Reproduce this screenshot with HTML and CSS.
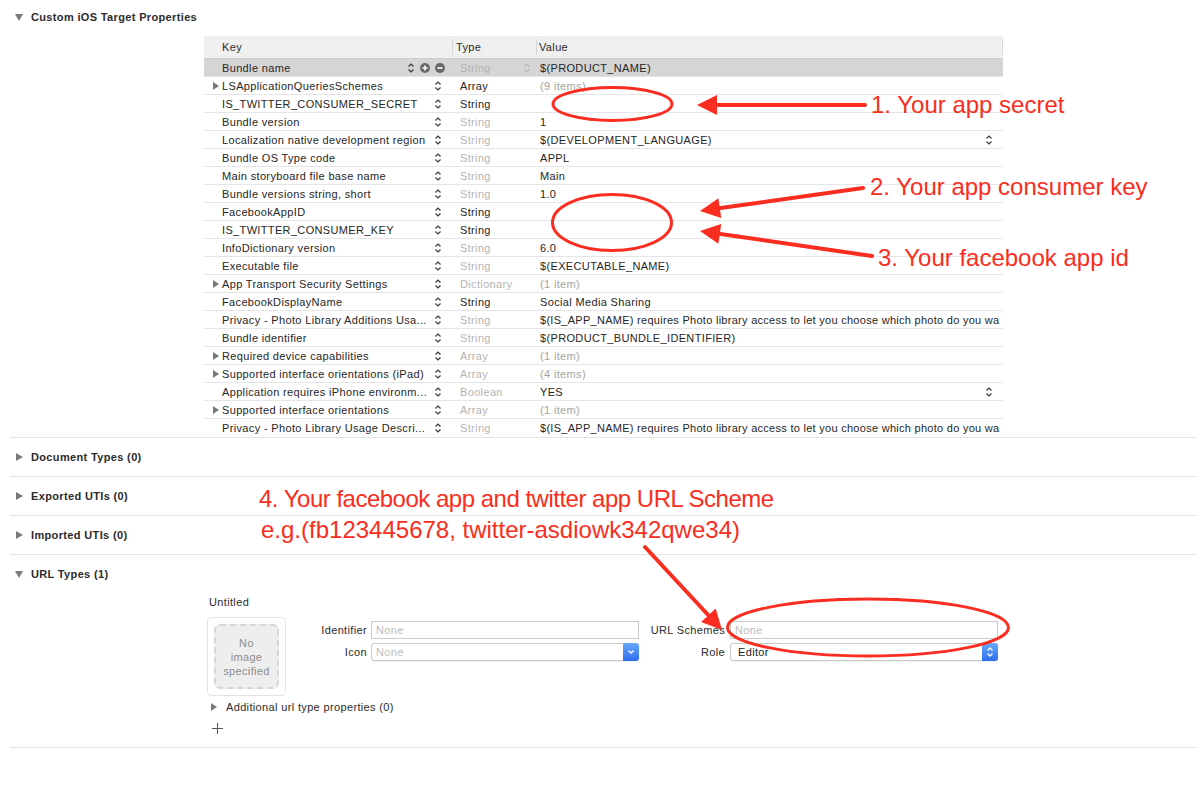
FILE: index.html
```html
<!DOCTYPE html>
<html>
<head>
<meta charset="utf-8">
<link rel="stylesheet" href="styles.css">
</head>
<body>
<div class="page">
  <section class="sec sec-first">
    <div class="sec-head"><svg class="tri-down" width="8" height="7" viewBox="0 0 8 7"><path d="M0 0H8L4 7Z"/></svg><span>Custom iOS Target Properties</span></div>
    <div class="plist">
      <div class="phead">
        <div class="hc hkey">Key</div>
        <div class="hc htype">Type</div>
        <div class="hc hval">Value</div>
      </div>
      <div class="row sel">
        <div class="k"><span class="ts"></span><span class="kt">Bundle name</span>
          <svg class="stp" width="8" height="12" viewBox="0 0 8 12"><path d="M1.5 4.5 4 2 6.5 4.5M1.5 7.5 4 10 6.5 7.5"/></svg>
          <svg class="pm" width="10" height="10" viewBox="0 0 10 10"><circle cx="5" cy="5" r="5"/><path d="M2.4 5H7.6M5 2.4V7.6"/></svg>
          <svg class="pm" width="10" height="10" viewBox="0 0 10 10"><circle cx="5" cy="5" r="5"/><path d="M2.4 5H7.6"/></svg>
        </div>
        <div class="t dim">String<svg class="stp light" width="8" height="12" viewBox="0 0 8 12"><path d="M1.5 4.5 4 2 6.5 4.5M1.5 7.5 4 10 6.5 7.5"/></svg></div>
        <div class="v">$(PRODUCT_NAME)</div>
      </div>
      <div class="row">
        <div class="k"><span class="ts"><svg class="tri" width="6" height="8" viewBox="0 0 6 8"><path d="M0 0 6 4 0 8Z"/></svg></span><span class="kt">LSApplicationQueriesSchemes</span><svg class="stp" width="8" height="12" viewBox="0 0 8 12"><path d="M1.5 4.5 4 2 6.5 4.5M1.5 7.5 4 10 6.5 7.5"/></svg></div>
        <div class="t">Array</div>
        <div class="v dim2">(9 items)</div>
      </div>
      <div class="row">
        <div class="k"><span class="ts"></span><span class="kt">IS_TWITTER_CONSUMER_SECRET</span><svg class="stp" width="8" height="12" viewBox="0 0 8 12"><path d="M1.5 4.5 4 2 6.5 4.5M1.5 7.5 4 10 6.5 7.5"/></svg></div>
        <div class="t">String</div>
        <div class="v"></div>
      </div>
      <div class="row">
        <div class="k"><span class="ts"></span><span class="kt">Bundle version</span><svg class="stp" width="8" height="12" viewBox="0 0 8 12"><path d="M1.5 4.5 4 2 6.5 4.5M1.5 7.5 4 10 6.5 7.5"/></svg></div>
        <div class="t dim">String</div>
        <div class="v">1</div>
      </div>
      <div class="row">
        <div class="k"><span class="ts"></span><span class="kt">Localization native development region</span><svg class="stp" width="8" height="12" viewBox="0 0 8 12"><path d="M1.5 4.5 4 2 6.5 4.5M1.5 7.5 4 10 6.5 7.5"/></svg></div>
        <div class="t dim">String</div>
        <div class="v"><span class="vt">$(DEVELOPMENT_LANGUAGE)</span><svg class="stp" width="8" height="12" viewBox="0 0 8 12"><path d="M1.5 4.5 4 2 6.5 4.5M1.5 7.5 4 10 6.5 7.5"/></svg></div>
      </div>
      <div class="row">
        <div class="k"><span class="ts"></span><span class="kt">Bundle OS Type code</span><svg class="stp" width="8" height="12" viewBox="0 0 8 12"><path d="M1.5 4.5 4 2 6.5 4.5M1.5 7.5 4 10 6.5 7.5"/></svg></div>
        <div class="t dim">String</div>
        <div class="v">APPL</div>
      </div>
      <div class="row">
        <div class="k"><span class="ts"></span><span class="kt">Main storyboard file base name</span><svg class="stp" width="8" height="12" viewBox="0 0 8 12"><path d="M1.5 4.5 4 2 6.5 4.5M1.5 7.5 4 10 6.5 7.5"/></svg></div>
        <div class="t dim">String</div>
        <div class="v">Main</div>
      </div>
      <div class="row">
        <div class="k"><span class="ts"></span><span class="kt">Bundle versions string, short</span><svg class="stp" width="8" height="12" viewBox="0 0 8 12"><path d="M1.5 4.5 4 2 6.5 4.5M1.5 7.5 4 10 6.5 7.5"/></svg></div>
        <div class="t dim">String</div>
        <div class="v">1.0</div>
      </div>
      <div class="row">
        <div class="k"><span class="ts"></span><span class="kt">FacebookAppID</span><svg class="stp" width="8" height="12" viewBox="0 0 8 12"><path d="M1.5 4.5 4 2 6.5 4.5M1.5 7.5 4 10 6.5 7.5"/></svg></div>
        <div class="t">String</div>
        <div class="v"></div>
      </div>
      <div class="row">
        <div class="k"><span class="ts"></span><span class="kt">IS_TWITTER_CONSUMER_KEY</span><svg class="stp" width="8" height="12" viewBox="0 0 8 12"><path d="M1.5 4.5 4 2 6.5 4.5M1.5 7.5 4 10 6.5 7.5"/></svg></div>
        <div class="t">String</div>
        <div class="v"></div>
      </div>
      <div class="row">
        <div class="k"><span class="ts"></span><span class="kt">InfoDictionary version</span><svg class="stp" width="8" height="12" viewBox="0 0 8 12"><path d="M1.5 4.5 4 2 6.5 4.5M1.5 7.5 4 10 6.5 7.5"/></svg></div>
        <div class="t dim">String</div>
        <div class="v">6.0</div>
      </div>
      <div class="row">
        <div class="k"><span class="ts"></span><span class="kt">Executable file</span><svg class="stp" width="8" height="12" viewBox="0 0 8 12"><path d="M1.5 4.5 4 2 6.5 4.5M1.5 7.5 4 10 6.5 7.5"/></svg></div>
        <div class="t dim">String</div>
        <div class="v">$(EXECUTABLE_NAME)</div>
      </div>
      <div class="row">
        <div class="k"><span class="ts"><svg class="tri" width="6" height="8" viewBox="0 0 6 8"><path d="M0 0 6 4 0 8Z"/></svg></span><span class="kt">App Transport Security Settings</span><svg class="stp" width="8" height="12" viewBox="0 0 8 12"><path d="M1.5 4.5 4 2 6.5 4.5M1.5 7.5 4 10 6.5 7.5"/></svg></div>
        <div class="t dim">Dictionary</div>
        <div class="v dim2">(1 item)</div>
      </div>
      <div class="row">
        <div class="k"><span class="ts"></span><span class="kt">FacebookDisplayName</span><svg class="stp" width="8" height="12" viewBox="0 0 8 12"><path d="M1.5 4.5 4 2 6.5 4.5M1.5 7.5 4 10 6.5 7.5"/></svg></div>
        <div class="t">String</div>
        <div class="v">Social Media Sharing</div>
      </div>
      <div class="row">
        <div class="k"><span class="ts"></span><span class="kt">Privacy - Photo Library Additions Usa...</span><svg class="stp" width="8" height="12" viewBox="0 0 8 12"><path d="M1.5 4.5 4 2 6.5 4.5M1.5 7.5 4 10 6.5 7.5"/></svg></div>
        <div class="t dim">String</div>
        <div class="v long">$(IS_APP_NAME) requires Photo library access to let you choose which photo do you wa</div>
      </div>
      <div class="row">
        <div class="k"><span class="ts"></span><span class="kt">Bundle identifier</span><svg class="stp" width="8" height="12" viewBox="0 0 8 12"><path d="M1.5 4.5 4 2 6.5 4.5M1.5 7.5 4 10 6.5 7.5"/></svg></div>
        <div class="t dim">String</div>
        <div class="v">$(PRODUCT_BUNDLE_IDENTIFIER)</div>
      </div>
      <div class="row">
        <div class="k"><span class="ts"><svg class="tri" width="6" height="8" viewBox="0 0 6 8"><path d="M0 0 6 4 0 8Z"/></svg></span><span class="kt">Required device capabilities</span><svg class="stp" width="8" height="12" viewBox="0 0 8 12"><path d="M1.5 4.5 4 2 6.5 4.5M1.5 7.5 4 10 6.5 7.5"/></svg></div>
        <div class="t dim">Array</div>
        <div class="v dim2">(1 item)</div>
      </div>
      <div class="row">
        <div class="k"><span class="ts"><svg class="tri" width="6" height="8" viewBox="0 0 6 8"><path d="M0 0 6 4 0 8Z"/></svg></span><span class="kt">Supported interface orientations (iPad)</span><svg class="stp" width="8" height="12" viewBox="0 0 8 12"><path d="M1.5 4.5 4 2 6.5 4.5M1.5 7.5 4 10 6.5 7.5"/></svg></div>
        <div class="t dim">Array</div>
        <div class="v dim2">(4 items)</div>
      </div>
      <div class="row">
        <div class="k"><span class="ts"></span><span class="kt">Application requires iPhone environm...</span><svg class="stp" width="8" height="12" viewBox="0 0 8 12"><path d="M1.5 4.5 4 2 6.5 4.5M1.5 7.5 4 10 6.5 7.5"/></svg></div>
        <div class="t dim">Boolean</div>
        <div class="v"><span class="vt">YES</span><svg class="stp" width="8" height="12" viewBox="0 0 8 12"><path d="M1.5 4.5 4 2 6.5 4.5M1.5 7.5 4 10 6.5 7.5"/></svg></div>
      </div>
      <div class="row">
        <div class="k"><span class="ts"><svg class="tri" width="6" height="8" viewBox="0 0 6 8"><path d="M0 0 6 4 0 8Z"/></svg></span><span class="kt">Supported interface orientations</span><svg class="stp" width="8" height="12" viewBox="0 0 8 12"><path d="M1.5 4.5 4 2 6.5 4.5M1.5 7.5 4 10 6.5 7.5"/></svg></div>
        <div class="t dim">Array</div>
        <div class="v dim2">(1 item)</div>
      </div>
      <div class="row">
        <div class="k"><span class="ts"></span><span class="kt">Privacy - Photo Library Usage Descri...</span><svg class="stp" width="8" height="12" viewBox="0 0 8 12"><path d="M1.5 4.5 4 2 6.5 4.5M1.5 7.5 4 10 6.5 7.5"/></svg></div>
        <div class="t dim">String</div>
        <div class="v long">$(IS_APP_NAME) requires Photo library access to let you choose which photo do you wa</div>
      </div>
    </div>
  </section>

  <section class="sec sec-col">
    <div class="sec-head"><svg class="tri-right" width="7" height="8" viewBox="0 0 7 8"><path d="M0 0 7 4 0 8Z"/></svg><span>Document Types (0)</span></div>
  </section>
  <section class="sec sec-col">
    <div class="sec-head"><svg class="tri-right" width="7" height="8" viewBox="0 0 7 8"><path d="M0 0 7 4 0 8Z"/></svg><span>Exported UTIs (0)</span></div>
  </section>
  <section class="sec sec-col">
    <div class="sec-head"><svg class="tri-right" width="7" height="8" viewBox="0 0 7 8"><path d="M0 0 7 4 0 8Z"/></svg><span>Imported UTIs (0)</span></div>
  </section>
  <section class="sec sec-url">
    <div class="sec-head"><svg class="tri-down" width="8" height="7" viewBox="0 0 8 7"><path d="M0 0H8L4 7Z"/></svg><span>URL Types (1)</span></div>
    <div class="url-body">
      <div class="untitled">Untitled</div>
      <div class="item">
        <div class="well"><div class="well-in">No<br>image<br>specified</div></div>
        <div class="fields">
          <div class="lbl">Identifier</div>
          <div class="field"><span class="ph">None</span></div>
          <div class="lbl lbl2">URL Schemes</div>
          <div class="field"><span class="ph">None</span></div>
          <div class="lbl">Icon</div>
          <div class="popup"><span class="ph">None</span><span class="btn"><svg width="8" height="6" viewBox="0 0 8 6"><path d="M1.5 1.5 4 4 6.5 1.5"/></svg></span></div>
          <div class="lbl lbl2">Role</div>
          <div class="popup"><span class="val">Editor</span><span class="btn"><svg width="8" height="12" viewBox="0 0 8 12"><path d="M1.5 4.5 4 2 6.5 4.5M1.5 7.5 4 10 6.5 7.5"/></svg></span></div>
        </div>
      </div>
      <div class="addl"><svg class="tri" width="6" height="8" viewBox="0 0 6 8"><path d="M0 0 6 4 0 8Z"/></svg><span>Additional url type properties (0)</span></div>
      <div class="plus"><svg width="11" height="11" viewBox="0 0 11 11"><path d="M5.5 0V11M0 5.5H11"/></svg></div>
    </div>
  </section>
</div>

<div class="annot">
  <svg width="1204" height="788" viewBox="0 0 1204 788">
    <g fill="none" stroke="#fa2d20" stroke-width="3">
      <ellipse cx="612.5" cy="104" rx="59.5" ry="16.5"/>
      <ellipse cx="612" cy="222.5" rx="59.5" ry="28"/>
      <ellipse cx="868" cy="627.5" rx="140.5" ry="28.5"/>
    </g>
    <g stroke="#fa2d20" stroke-width="4" stroke-linecap="round">
      <line x1="865" y1="105" x2="714" y2="105"/>
      <line x1="863" y1="188" x2="717" y2="208.6"/>
      <line x1="872" y1="256" x2="717" y2="233.5"/>
      <line x1="645" y1="547" x2="710.5" y2="617.5"/>
    </g>
    <g fill="#fa2d20">
      <polygon points="697,105 717,95 717,115"/>
      <polygon points="700,211 721.2,218.1 718.4,198.3"/>
      <polygon points="700,231 718.4,243.8 721.2,224"/>
      <polygon points="722,630 701.1,622.1 715.7,608.5"/>
    </g>
  </svg>
  <div class="note n1">1. Your app secret</div>
  <div class="note n2">2. Your app consumer key</div>
  <div class="note n3">3. Your facebook app id</div>
  <div class="note n4">4. Your facebook app and twitter app URL Scheme</div>
  <div class="note n5">e.g.(fb123445678, twitter-asdiowk342qwe34)</div>
</div>
</body>
</html>
```

FILE: styles.css
```css
html, body {
  margin: 0;
  padding: 0;
  background: #ffffff;
}
body {
  position: relative;
  width: 1204px;
  height: 788px;
  overflow: hidden;
  font-family: "Liberation Sans", Arial, sans-serif;
  font-size: 11px;
  letter-spacing: 0.35px;
  color: #262626;
}
.page {
  padding: 0 7px 0 10px;
}
.sec {
  border-bottom: 1px solid #e3e3e3;
}
.sec-first {
  padding-top: 7px;
}
.sec-head {
  display: flex;
  align-items: center;
  height: 20px;
  padding-left: 5px;
  font-weight: bold;
  color: #2b2b2b;
}
.sec-head svg {
  fill: #7b7b7b;
  margin-right: 8px;
}
.sec-head .tri-right {
  margin-left: 1px;
  margin-right: 8px;
}
.sec-col .sec-head,
.sec-url .sec-head {
  height: 38px;
}

/* plist table */
.plist {
  margin: 9px 0 0 194px;
  width: 799px;
}
.phead {
  display: grid;
  grid-template-columns: 248px 84px 1fr;
  height: 22px;
  background: #f0f0f0;
  border-bottom: 1px solid #cdcdcd;
}
.hc {
  display: flex;
  align-items: center;
  color: #2b2b2b;
  position: relative;
}
.hkey { padding-left: 18px; }
.htype { padding-left: 4px; }
.hval { padding-left: 3px; }
.htype::before, .hval::before, .hval::after {
  content: "";
  position: absolute;
  top: 3px;
  bottom: 3px;
  width: 1px;
  background: #d6d6d6;
}
.htype::before, .hval::before { left: 0; }
.hval::after { right: 0; }

.row {
  display: grid;
  grid-template-columns: 248px 84px 1fr;
  height: 17px;
  border-bottom: 1px solid #e5e5e5;
  align-items: center;
  white-space: nowrap;
}
.row:last-child {
  height: 18px;
  border-bottom: none;
}
.row.sel {
  background: #d5d5d5;
}
.k {
  display: flex;
  align-items: center;
  padding-left: 9px;
  padding-right: 10px;
  min-width: 0;
}
.row.sel .k { padding-right: 7px; }
.ts {
  width: 9px;
  flex: none;
  display: flex;
  align-items: center;
}
.tri { fill: #7a7a7a; }
.kt {
  flex: 1;
  overflow: hidden;
}
.stp {
  flex: none;
  fill: none;
  stroke: #3a3a3a;
  stroke-width: 1.2;
}
.stp.light { stroke: #b9b9b9; }
.pm {
  flex: none;
  margin-left: 5px;
}
.pm circle { fill: #6a6a6a; }
.pm path { stroke: #fff; stroke-width: 1.6; fill: none; }
.t {
  display: flex;
  align-items: center;
  justify-content: space-between;
  padding-left: 8px;
  padding-right: 5px;
  color: #262626;
}
.t.dim { color: #b4b4b4; }
.v {
  display: flex;
  align-items: center;
  padding-left: 4px;
  padding-right: 0;
  overflow: hidden;
  color: #262626;
}
.v.long { letter-spacing: 0.28px; }
.v .vt { flex: 1; }
.v .stp { margin-right: 10px; }
.v.dim2 { color: #a3a3a3; }

/* URL types */
.url-body {
  padding: 1px 0 11px 197px;
}
.untitled {
  height: 16px;
  line-height: 16px;
  padding-left: 2px;
  color: #2b2b2b;
}
.item {
  display: flex;
  margin-top: 7px;
}
.well {
  border: 1px solid #e4e4e4;
  border-radius: 4px;
  padding: 6px;
  box-sizing: border-box;
  width: 79px;
  height: 79px;
}
.well-in {
  height: 100%;
  box-sizing: border-box;
  border: 2px dashed #d6d6d6;
  border-radius: 6px;
  background: #eeeeee;
  display: flex;
  align-items: center;
  justify-content: center;
  text-align: center;
  line-height: 14px;
  color: #8c8c8c;
}
.fields {
  display: grid;
  grid-template-columns: 85px 268px 91px 268px;
  grid-template-rows: 18px 18px;
  row-gap: 4px;
  margin-top: 4px;
  align-items: center;
}
.lbl {
  text-align: right;
  padding-right: 4px;
  color: #2b2b2b;
  white-space: nowrap;
}
.lbl2 { padding-right: 5px; }
.field, .popup {
  height: 18px;
  box-sizing: border-box;
  border: 1px solid #c9c9c9;
  background: #fff;
  display: flex;
  align-items: center;
  padding-left: 4px;
}
.popup {
  border-radius: 3px;
  padding-right: 0;
  box-shadow: 0 1px 1px rgba(0,0,0,0.06);
}
.ph { color: #bdbdbd; flex: 1; }
.val { color: #222; flex: 1; padding-left: 3px; }
.btn {
  width: 16px;
  height: 18px;
  margin: -1px -1px -1px 0;
  border-radius: 0 3px 3px 0;
  background: linear-gradient(#6aa8fa, #2c6ff0);
  display: flex;
  align-items: center;
  justify-content: center;
}
.btn svg {
  fill: none;
  stroke: #fff;
  stroke-width: 1.3;
}
.addl {
  display: flex;
  align-items: center;
  height: 16px;
  margin-top: 3px;
  padding-left: 4px;
  color: #2b2b2b;
}
.addl .tri { margin-right: 9px; }
.plus {
  height: 16px;
  margin-top: 5px;
  padding-left: 5px;
  display: flex;
  align-items: center;
}
.plus svg {
  stroke: #555;
  stroke-width: 1;
  fill: none;
}

/* annotation layer */
.annot {
  position: absolute;
  left: 0;
  top: 0;
  width: 1204px;
  height: 788px;
  pointer-events: none;
}
.annot svg {
  position: absolute;
  left: 0;
  top: 0;
}
.note {
  position: absolute;
  font-family: "Liberation Sans", Arial, sans-serif;
  font-size: 24px;
  line-height: 24px;
  letter-spacing: 0;
  color: #fa2d20;
  white-space: nowrap;
}
.n1 { left: 871px; top: 93px; }
.n2 { left: 870px; top: 175px; }
.n3 { left: 878px; top: 246px; }
.n4 { left: 259px; top: 487px; letter-spacing: -0.5px; }
.n5 { left: 261px; top: 518px; }
```
